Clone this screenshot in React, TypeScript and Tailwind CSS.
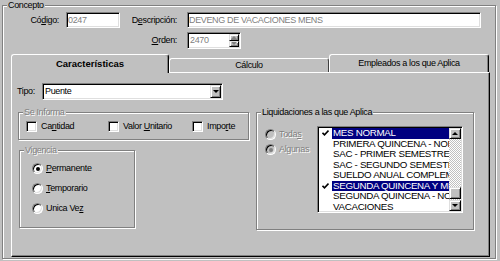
import type { ReactNode } from "react";

// classic win32 bevels
const sunken =
  "border border-t-[#808080] border-l-[#808080] border-b-white border-r-white shadow-[inset_1px_1px_0_#000,inset_-1px_-1px_0_#dfdfdf]";
const raised =
  "border border-t-[#dfdfdf] border-l-[#dfdfdf] border-b-black border-r-black shadow-[inset_1px_1px_0_#fff,inset_-1px_-1px_0_#808080]";
const etched = "border border-[#808080] shadow-[inset_1px_1px_0_#fff,1px_1px_0_#fff]";
const grayed = "text-[#808080] [text-shadow:1px_1px_0_#fff]";

function U({ children }: { children: string }) {
  return <span className="underline underline-offset-[1px]">{children}</span>;
}

function GroupBox({
  label,
  disabled = false,
  className = "",
  children,
}: {
  label: string;
  disabled?: boolean;
  className?: string;
  children?: ReactNode;
}) {
  return (
    <div className={`relative ${etched} ${className}`}>
      <span
        className={`absolute -top-[6px] left-[4px] px-[1px] leading-[11px] bg-[#c0c0c0] ${
          disabled ? grayed : ""
        }`}
      >
        {label}
      </span>
      {children}
    </div>
  );
}

function Checkbox({ children }: { children: ReactNode }) {
  return (
    <div className="flex items-center">
      <span className={`w-[11px] h-[11px] bg-white ${sunken}`} />
      <span className="ml-[4px]">{children}</span>
    </div>
  );
}

function Radio({
  checked = false,
  disabled = false,
  children,
}: {
  checked?: boolean;
  disabled?: boolean;
  children: ReactNode;
}) {
  return (
    <div className="flex items-center h-[11px]">
      <span
        className={`w-[11px] h-[11px] rounded-full flex items-center justify-center border border-t-[#808080] border-l-[#808080] border-b-white border-r-white shadow-[inset_1px_1px_0_#000,inset_-1px_-1px_0_#dfdfdf] ${
          disabled ? "bg-[#c0c0c0]" : "bg-white"
        }`}
      >
        {checked && (
          <span
            className={`w-[4px] h-[4px] rounded-full ${disabled ? "bg-[#808080]" : "bg-black"}`}
          />
        )}
      </span>
      <span className={`ml-[3px] ${disabled ? grayed : ""}`}>{children}</span>
    </div>
  );
}

function ArrowDown({ gray = false }: { gray?: boolean }) {
  return (
    <span
      className={`w-0 h-0 border-x-[3px] border-x-transparent border-t-[3px] ${
        gray ? "border-t-[#808080]" : "border-t-black"
      }`}
    />
  );
}

function ArrowUp({ gray = false }: { gray?: boolean }) {
  return (
    <span
      className={`w-0 h-0 border-x-[3px] border-x-transparent border-b-[3px] ${
        gray ? "border-b-[#808080]" : "border-b-black"
      }`}
    />
  );
}

const liquidaciones = [
  { label: "MES NORMAL", checked: true },
  { label: "PRIMERA QUINCENA - NORMAL", checked: false },
  { label: "SAC - PRIMER SEMESTRE", checked: false },
  { label: "SAC - SEGUNDO SEMESTRE", checked: false },
  { label: "SUELDO ANUAL COMPLEMENTARIO", checked: false },
  { label: "SEGUNDA QUINCENA Y MES", checked: true },
  { label: "SEGUNDA QUINCENA - NORMAL", checked: false },
  { label: "VACACIONES", checked: false },
];

function CheckMark() {
  return (
    <svg width="7" height="6" viewBox="0 0 7 6" className="block">
      <path d="M0.5 2.8 L2.5 4.8 L6.5 0.6" fill="none" stroke="#000" strokeWidth="1.6" />
    </svg>
  );
}

function LiquidacionesList() {
  return (
    <div className={`ml-auto mr-[10px] w-[146px] h-[87px] p-px bg-white flex ${sunken}`}>
      <div className="w-[13px] flex flex-col overflow-hidden">
        {liquidaciones.map((l) => (
          <div key={l.label} className="h-[10.5px] shrink-0 flex items-center justify-center">
            {l.checked && <CheckMark />}
          </div>
        ))}
      </div>
      <div className="w-[117px] flex flex-col overflow-hidden font-['Liberation_Sans',Arial,sans-serif] text-[9.75px] tracking-[-0.3px]">
        {liquidaciones.map((l) => (
          <div
            key={l.label}
            className={`h-[10.5px] shrink-0 leading-[10.5px] pl-[1px] whitespace-nowrap overflow-hidden ${
              l.checked ? "bg-[#000080] text-white" : "text-black"
            }`}
          >
            {l.label}
          </div>
        ))}
      </div>
      <div className="w-[12px] flex flex-col">
        <div className={`h-[11px] bg-[#c0c0c0] flex items-center justify-center ${raised}`}>
          <ArrowUp />
        </div>
        <div className="h-[48px] bg-[image:repeating-conic-gradient(#fff_0%_25%,#c0c0c0_0%_50%)] bg-[length:2px_2px]" />
        <div className={`h-[12px] bg-[#c0c0c0] ${raised}`} />
        <div className="h-[1px] bg-[image:repeating-conic-gradient(#fff_0%_25%,#c0c0c0_0%_50%)] bg-[length:2px_2px]" />
        <div className={`h-[11px] bg-[#c0c0c0] flex items-center justify-center ${raised}`}>
          <ArrowDown />
        </div>
      </div>
    </div>
  );
}

export default function App() {
  return (
    <div className="w-[500px] h-[261px] overflow-hidden bg-[#c0c0c0] pt-[5px] pl-[2px] text-black text-[9px] leading-[11px] tracking-[-0.35px] font-['Liberation_Sans',Arial,sans-serif]">
      <GroupBox label="Concepto" className="w-[494px] h-[254px]">
        {/* Código / Descripción */}
        <div className="flex items-center mt-[6px] h-[16px]">
          <span className="w-[56px] text-right">
            Có<U>d</U>igo:
          </span>
          <div className={`ml-[7px] w-[54px] h-[16px] bg-white pl-[1px] flex items-center text-[#808080] ${sunken}`}>
            0247
          </div>
          <span className="w-[57px] text-right">
            D<U>e</U>scripción:
          </span>
          <div className={`ml-[10px] w-[294px] h-[16px] bg-white pl-[1px] flex items-center text-[#808080] ${sunken}`}>
            DEVENG DE VACACIONES MENS
          </div>
        </div>

        {/* Orden */}
        <div className="flex items-center mt-[4px] h-[17px]">
          <span className="w-[174px] text-right">
            <U>O</U>rden:
          </span>
          <div className={`ml-[10px] w-[54px] h-[17px] bg-white p-px flex ${sunken}`}>
            <span className="flex-1 pl-[1px] flex items-center text-[#808080]">2470</span>
            <div className="w-[10px] flex flex-col">
              <div className={`flex-1 bg-[#c0c0c0] flex items-center justify-center ${raised}`}>
                <ArrowUp gray />
              </div>
              <div className={`flex-1 bg-[#c0c0c0] flex items-center justify-center ${raised}`}>
                <ArrowDown gray />
              </div>
            </div>
          </div>
        </div>

        {/* Tabs */}
        <div className="flex items-end h-[18px] mt-[5px] ml-[8px]">
          <div className="relative z-10 -mb-px w-[158px] h-[19px] bg-[#c0c0c0] rounded-t-[3px] border-t border-l border-white border-r border-r-black shadow-[inset_-1px_0_0_#808080] flex items-center justify-center pb-[1px] font-bold text-[9.5px] tracking-[0px]">
            Características
          </div>
          <div className="w-[160px] h-[14px] rounded-t-[3px] border-t border-l border-white border-r border-r-[#404040] flex items-center justify-center">
            Cálculo
          </div>
          <div className="w-[160px] h-[18px] rounded-t-[3px] border-t border-l border-white border-r border-r-black shadow-[inset_-1px_0_0_#808080] flex items-center justify-center">
            Empleados a los que Aplica
          </div>
        </div>

        {/* Tab panel */}
        <div className="ml-[8px] w-[479px] h-[185px] border-t border-l border-white border-r border-b border-r-black border-b-black shadow-[inset_-1px_-1px_0_#808080]">
          <div className="flex items-center mt-[10px] ml-[5px] h-[17px]">
            <span className="w-[25px]">Tipo:</span>
            <div className={`w-[181px] h-[17px] bg-white flex ${sunken}`}>
              <span className="flex-1 pl-[2px] flex items-center">Puente</span>
              <div className={`w-[11px] my-px mr-px bg-[#c0c0c0] flex items-center justify-center ${raised}`}>
                <ArrowDown />
              </div>
            </div>
          </div>

          <div className="flex mt-[12px]">
            <div className="ml-[6px] w-[231px]">
              <GroupBox label="Se Informa" disabled className="w-[231px] h-[28px]">
                <div className="flex items-center h-full pl-[7px]">
                  <div className="w-[82px]">
                    <Checkbox>
                      Ca<U>n</U>tidad
                    </Checkbox>
                  </div>
                  <div className="w-[84px]">
                    <Checkbox>
                      Valor <U>U</U>nitario
                    </Checkbox>
                  </div>
                  <Checkbox>
                    Impo<U>r</U>te
                  </Checkbox>
                </div>
              </GroupBox>

              <GroupBox label="Vigencia" disabled className="mt-[10px] ml-[1px] w-[116px] h-[78px]">
                <div className="flex flex-col gap-[9px] pt-[12px] pl-[12px]">
                  <Radio checked>
                    <U>P</U>ermanente
                  </Radio>
                  <Radio>
                    <U>T</U>emporario
                  </Radio>
                  <Radio>
                    Unica Ve<U>z</U>
                  </Radio>
                </div>
              </GroupBox>
            </div>

            <GroupBox label="Liquidaciones a las que Aplica" className="ml-[7px] w-[218px] h-[118px]">
              <div className="flex items-start pt-[13px]">
                <div className="ml-[8px] mt-[3px] flex flex-col gap-[4px]">
                  <Radio disabled>
                    Toda<U>s</U>
                  </Radio>
                  <Radio checked disabled>
                    Algunas
                  </Radio>
                </div>
                <LiquidacionesList />
              </div>
            </GroupBox>
          </div>
        </div>
      </GroupBox>
    </div>
  );
}
